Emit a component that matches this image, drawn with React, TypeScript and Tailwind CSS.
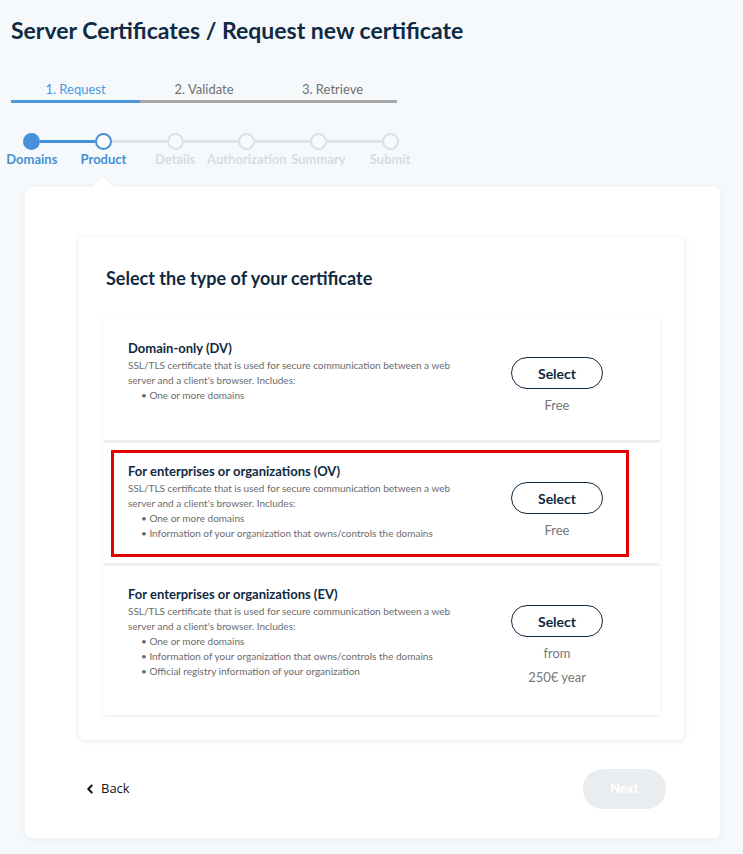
import { ChevronLeft } from "lucide-react";

const steps = [
  { label: "Domains", state: "done" },
  { label: "Product", state: "current" },
  { label: "Details", state: "todo" },
  { label: "Authorization", state: "todo" },
  { label: "Summary", state: "todo" },
  { label: "Submit", state: "todo" },
];

const options = [
  {
    title: "Domain-only (DV)",
    bullets: ["One or more domains"],
    price: ["Free"],
    box: "h-[122px] pt-[21px]",
    col: "pt-[18px]",
  },
  {
    title: "For enterprises or organizations (OV)",
    bullets: [
      "One or more domains",
      "Information of your organization that owns/controls the domains",
    ],
    price: ["Free"],
    box: "h-[120px] pt-[19px]",
    col: "pt-[20px]",
  },
  {
    title: "For enterprises or organizations (EV)",
    bullets: [
      "One or more domains",
      "Information of your organization that owns/controls the domains",
      "Official registry information of your organization",
    ],
    price: ["from", "250€ year"],
    box: "h-[149px] pt-[19px]",
    col: "pt-[20px]",
  },
];

const Stepper = () => {
  return (
    <div className="grid grid-cols-6 w-[430px] -ml-[4px] mt-[29px]">
      {steps.map((step, i) => {
        const leftBlue = i <= 1;
        const rightBlue = i === 0;
        return (
          <div key={step.label} className="flex flex-col items-center">
            <div className="flex items-center w-full h-[18px]">
              <div
                className={
                  i === 0
                    ? "flex-1"
                    : leftBlue
                    ? "flex-1 h-[3px] bg-[#4590d6]"
                    : "flex-1 h-[3px] bg-[#dfe3e8]"
                }
              />
              {step.state === "done" && (
                <div className="w-[17px] h-[17px] rounded-full bg-[#4590d6]" />
              )}
              {step.state === "current" && (
                <div className="w-[17px] h-[17px] rounded-full border-2 border-[#4590d6] bg-white" />
              )}
              {step.state === "todo" && (
                <div className="w-[17px] h-[17px] rounded-full border-2 border-[#dde1e6] bg-[#f7f9fb]" />
              )}
              <div
                className={
                  i === 5
                    ? "flex-1"
                    : rightBlue
                    ? "flex-1 h-[3px] bg-[#4590d6]"
                    : "flex-1 h-[3px] bg-[#dfe3e8]"
                }
              />
            </div>
            <span
              className={
                step.state === "todo"
                  ? "whitespace-nowrap text-[13px] font-bold leading-[18px] text-[#d7dce1]"
                  : "whitespace-nowrap text-[13px] font-bold leading-[18px] text-[#4590d6]"
              }
            >
              {step.label}
            </span>
          </div>
        );
      })}
    </div>
  );
};

const OptionCard = ({ option }: { option: (typeof options)[number] }) => {
  return (
    <div
      className={`flex bg-white shadow-[0_1px_4px_rgba(0,0,0,0.08)] pl-[25px] pr-[57px] ${option.box}`}
    >
      <div className="flex-1">
        <h3 className="text-[13px] font-bold leading-[19px] text-[#10293f]">
          {option.title}
        </h3>
        <p className="text-[10px] leading-[15px] text-[#6b6b6b] w-[345px]">
          SSL/TLS certificate that is used for secure communication between a
          web server and a client's browser. Includes:
        </p>
        <ul className="pl-[13px] text-[10px] leading-[15px] text-[#6b6b6b]">
          {option.bullets.map((b) => (
            <li key={b}>• {b}</li>
          ))}
        </ul>
      </div>
      <div className={`w-[92px] flex flex-col items-center ${option.col}`}>
        <button className="w-[92px] h-[32px] rounded-full border border-[#10293f] text-[14px] font-bold text-[#10293f]">
          Select
        </button>
        <div className="mt-[4px] text-[13px] leading-[24px] text-[#777] text-center">
          {option.price.map((p) => (
            <div key={p}>{p}</div>
          ))}
        </div>
      </div>
    </div>
  );
};

export default function App() {
  return (
    <div className="min-h-[854px] bg-[#f6f9fc] font-['Lato',sans-serif] pt-[16px] pb-[17px]">
      <h1 className="pl-[11px] text-[23px] font-bold leading-[28px] text-[#0f2a44]">
        Server Certificates / Request new certificate
      </h1>

      <div className="flex ml-[11px] mt-[35px]">
        <div className="w-[129px] text-center text-[13px] leading-[20px] text-[#4a98dd] border-b-[3px] border-[#4a98dd] pb-[1px]">
          1. Request
        </div>
        <div className="w-[128px] text-center text-[13px] leading-[20px] text-[#6f6f6f] border-b-[3px] border-[#a7a7a7] pb-[1px]">
          2. Validate
        </div>
        <div className="w-[129px] text-center text-[13px] leading-[20px] text-[#6f6f6f] border-b-[3px] border-[#a7a7a7] pb-[1px]">
          3. Retrieve
        </div>
      </div>

      <Stepper />

      <div className="relative ml-[25px] w-[695px] mt-[19px] bg-white rounded-[6px] shadow-[0_1px_6px_rgba(0,0,0,0.06)] pt-[50px] pb-[29px]">
        <svg
          className="absolute left-[66px] -top-[12px]"
          width="24"
          height="13"
          viewBox="0 0 24 13"
        >
          <path d="M0 13 L12 1 L24 13 Z" fill="#ffffff" />
          <path d="M0 13 L12 1 L24 13" fill="none" stroke="#eef1f4" strokeWidth="1" />
        </svg>

        <div className="ml-[54px] w-[605px] bg-white rounded-[6px] shadow-[0_1px_6px_rgba(0,0,0,0.1)] px-[24px] pt-[29px] pb-[25px]">
          <h2 className="pl-[3px] text-[18px] font-bold leading-[24px] text-[#10293f]">
            Select the type of your certificate
          </h2>

          <div className="relative mt-[28px] flex flex-col gap-[3px] bg-[#f7f8f9]">
            {options.map((o) => (
              <OptionCard key={o.title} option={o} />
            ))}
            <div className="absolute left-[8px] top-[132px] w-[518px] h-[107px] border-[3px] border-[#e30000]" />
          </div>
        </div>

        <div className="flex items-center justify-between mt-[29px] pl-[61px] pr-[54px]">
          <button className="flex items-center gap-[4px] text-[13px] text-[#111] font-['Open_Sans',sans-serif]">
            <ChevronLeft size={14} strokeWidth={3.5} className="-ml-[3px]" />
            Back
          </button>
          <button className="w-[83px] h-[40px] rounded-full bg-[#e9edf0] text-[13px] font-bold text-white">
            Next
          </button>
        </div>
      </div>
    </div>
  );
}
